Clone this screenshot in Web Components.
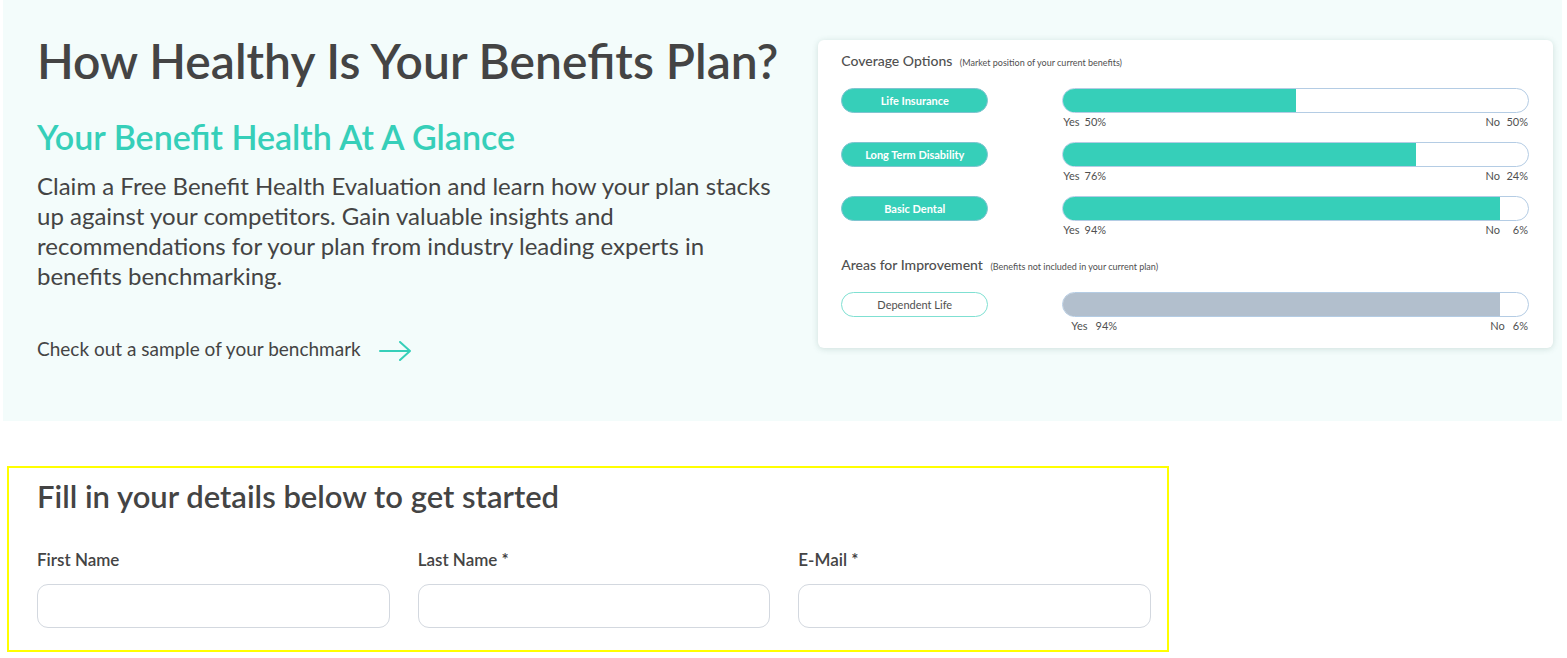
<!DOCTYPE html>
<html lang="en">
<head>
<meta charset="utf-8">
<meta name="viewport" content="width=device-width, initial-scale=1">
<title>Benefits Plan Evaluation</title>
<style>
  body { margin: 0; background: #fff; color: #444; font-family: Lato, "Open Sans", sans-serif; }
</style>
</head>
<body>
<benefit-page></benefit-page>
<script>
const define = (name, html, setup) => customElements.define(name, class extends HTMLElement {
  constructor() {
    super();
    this.attachShadow({ mode: 'open' }).innerHTML = html;
  }
  connectedCallback() { if (setup) setup(this, this.shadowRoot); }
});

/* Pill label with a proportional yes/no bar */
define('coverage-row', `
  <style>
    :host { display: grid; grid-template-columns: minmax(0, 9fr) minmax(0, 19fr); color: #505050; font-size: 11px; }
    .pill { box-sizing: border-box; width: 147px; max-width: 94%; height: 25px; line-height: 23px; text-align: center;
      border: 1px solid #7fc4d0; border-radius: 13px; background: #36cfb9; color: #fff; font-weight: 700; }
    .track { box-sizing: border-box; height: 25px; border: 1px solid #b4cce4; border-radius: 13px; overflow: hidden; background: #fff; }
    .fill { height: 100%; background: #36cfb9; }
    .values { display: flex; justify-content: space-between; padding: 0 1px; line-height: 18px; }
    .pair { display: flex; gap: 5px; }
    .no .n { min-width: 23px; text-align: right; }
    :host([muted]) .pill { background: #fff; border-color: #7fe0d2; color: #505050; font-weight: 400; }
    :host([muted]) .fill { background: #b2bfcd; }
    :host([muted]) .pair { gap: 8px; }
    :host([muted]) .yes { padding-left: 8px; }
    :host([muted]) .no .n { min-width: 0; }
  </style>
  <div class="pill"><slot></slot></div>
  <div>
    <div class="track"><div class="fill"></div></div>
    <div class="values">
      <div class="pair yes"><span>Yes</span><span class="n"></span></div>
      <div class="pair no"><span>No</span><span class="n"></span></div>
    </div>
  </div>`, (el, root) => {
    const yes = Number(el.getAttribute('yes'));
    root.querySelector('.fill').style.width = yes + '%';
    root.querySelector('.yes .n').textContent = yes + '%';
    root.querySelector('.no .n').textContent = (100 - yes) + '%';
  });

define('coverage-card', `
  <style>
    :host { display: block; box-sizing: border-box; padding: 11px 24px 13px 23px; background: #fff; border-radius: 6px;
      box-shadow: 0 1px 6px rgba(60, 110, 100, .2); }
    h3 { margin: 0 0 17px; font-size: 14px; line-height: 20px; font-weight: 500; color: #505050; }
    small { margin-left: 4px; font-size: 9px; line-height: 10px; font-weight: 400; }
    .rows { display: grid; gap: 11px; }
    .rows + h3 { margin-top: 16px; }
  </style>
  <h3>Coverage Options <small>(Market position of your current benefits)</small></h3>
  <div class="rows">
    <coverage-row yes="50">Life Insurance</coverage-row>
    <coverage-row yes="76">Long Term Disability</coverage-row>
    <coverage-row yes="94">Basic Dental</coverage-row>
  </div>
  <h3>Areas for Improvement <small>(Benefits not included in your current plan)</small></h3>
  <div class="rows"><coverage-row yes="94" muted>Dependent Life</coverage-row></div>`);

define('benefit-hero', `
  <style>
    :host { display: grid; grid-template-columns: minmax(0, 65fr) minmax(0, 64fr); gap: 35px; align-items: start;
      margin: 0 5px 0 3px; padding: 31px 9px 58px 34px; background: #f3fcfb; }
    coverage-card { margin-top: 9px; }
    h1 { margin: 0 0 24px; font-size: 48px; line-height: 60px; font-weight: 600; white-space: nowrap; }
    h2 { margin: 0 0 12px; font-size: 34px; line-height: 44px; font-weight: 600; color: #36cfb9; }
    p { margin: 0 0 44px; font-size: 24px; line-height: 30px; }
    a { display: inline-flex; align-items: center; gap: 18px; color: inherit; text-decoration: none; font-size: 19px; line-height: 28px; }
    svg { display: block; width: 32px; height: 20px; margin-top: 4px; }
  </style>
  <div>
    <h1>How Healthy Is Your Benefits Plan?</h1>
    <h2>Your Benefit Health At A Glance</h2>
    <p>Claim a Free Benefit Health Evaluation and learn how your plan stacks up against your competitors. Gain valuable insights and recommendations for your plan from industry leading experts in benefits benchmarking.</p>
    <a href="#sample">Check out a sample of your benchmark
      <svg viewBox="0 0 32 20" fill="none" stroke="#36cfb9" stroke-width="2" stroke-linecap="round" stroke-linejoin="round" aria-hidden="true"><path d="M1 10H31M21 1L31 10L21 19"/></svg>
    </a>
  </div>
  <coverage-card></coverage-card>`);

define('form-field', `
  <style>
    :host { display: block; }
    label { display: block; margin-bottom: 12px; font-size: 17px; line-height: 24px; font-weight: 600; }
    input { display: block; box-sizing: border-box; width: 100%; height: 44px; padding: 0 12px; border: 1px solid #d3d8df;
      border-radius: 11px; background: #fff; color: inherit; font: inherit; font-size: 17px; }
  </style>
  <label for="field"></label><input id="field">`, (el, root) => {
    root.querySelector('label').textContent = el.getAttribute('label');
    root.querySelector('input').type = el.getAttribute('type') || 'text';
    root.querySelector('input').required = el.hasAttribute('required');
  });

define('details-form', `
  <style>
    :host { display: block; box-sizing: border-box; max-width: 1162px; margin: 45px 7px 6px; padding: 10px 16px 22px 28px; border: 2px solid #ff0; }
    h2 { margin: 0 0 34px; font-size: 31px; line-height: 36px; font-weight: 600; }
    form { display: grid; grid-template-columns: repeat(3, minmax(0, 1fr)); gap: 28px; }
  </style>
  <h2>Fill in your details below to get started</h2>
  <form>
    <form-field label="First Name"></form-field>
    <form-field label="Last Name *" required></form-field>
    <form-field label="E-Mail *" type="email" required></form-field>
  </form>`);

define('benefit-page', `
  <style>:host { display: block; }</style>
  <main><benefit-hero></benefit-hero><details-form></details-form></main>`);
</script>
</body>
</html>
